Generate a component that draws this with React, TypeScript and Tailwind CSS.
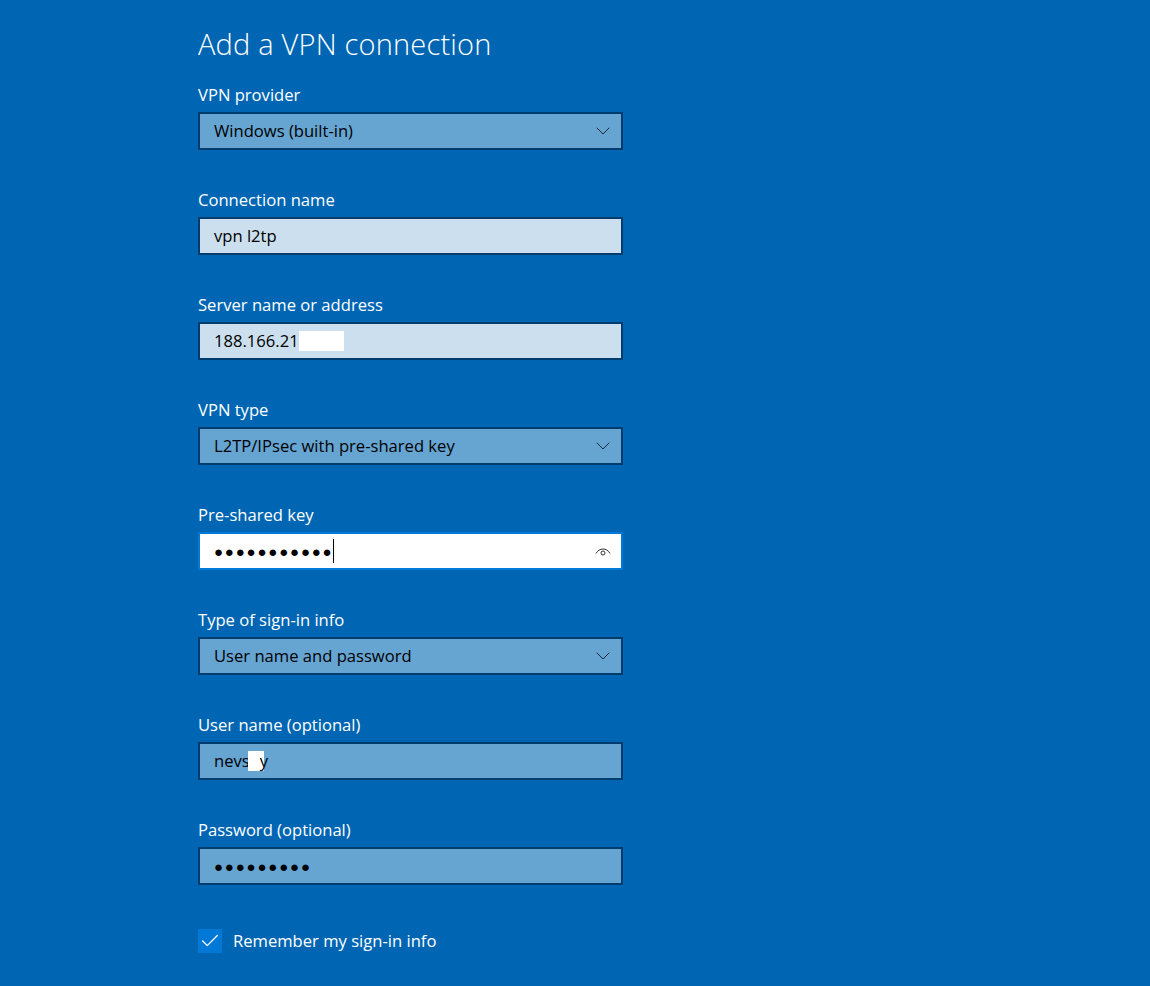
import { ChevronDown, Check } from "lucide-react";

type Field = {
  label: string;
  kind: "select" | "text" | "focus" | "plain";
  value: React.ReactNode;
};

const Dots = ({ n }: { n: number }) => (
  <span className="tracking-[1.8px] text-[15px]">{"●".repeat(n)}</span>
);

const EyeIcon = () => (
  <svg width="16" height="11" viewBox="0 0 16 11" fill="none" stroke="#333" strokeWidth="1" className="mr-[4px]">
    <path d="M1 7.5 C4 1.5 12 1.5 15 7.5" />
    <circle cx="8" cy="7" r="2" />
  </svg>
);

const FIELDS: Field[] = [
  { label: "VPN provider", kind: "select", value: "Windows (built-in)" },
  { label: "Connection name", kind: "text", value: "vpn l2tp" },
  {
    label: "Server name or address",
    kind: "text",
    value: (
      <span className="flex items-center">
        188.166.21
        <span className="inline-block w-[45px] h-[20px] bg-white" />
      </span>
    ),
  },
  { label: "VPN type", kind: "select", value: "L2TP/IPsec with pre-shared key" },
  {
    label: "Pre-shared key",
    kind: "focus",
    value: (
      <span className="flex items-center">
        <Dots n={11} />
        <span className="inline-block w-px h-[24px] bg-black" />
      </span>
    ),
  },
  { label: "Type of sign-in info", kind: "select", value: "User name and password" },
  {
    label: "User name (optional)",
    kind: "plain",
    value: (
      <span className="flex items-center">
        nevs
        <span className="inline-block w-[16px] h-[20px] bg-white -ml-[2px]" />
        <span className="-ml-[4px]">y</span>
      </span>
    ),
  },
  { label: "Password (optional)", kind: "plain", value: <Dots n={9} /> },
];

function Input({ f }: { f: Field }) {
  const base = "h-[38px] w-[425px] border-2 flex items-center pl-[14px] pr-[6px] text-[16.6px] text-black";
  const tone =
    f.kind === "focus"
      ? "bg-white border-[#0078d7]"
      : f.kind === "text"
      ? "bg-[#cbdfee] border-[#003d6e]"
      : "bg-[#66a5d2] border-[#003d6e]";
  return (
    <div className={`${base} ${tone}`}>
      <div className="flex-1">{f.value}</div>
      {f.kind === "select" && <ChevronDown size={24} strokeWidth={1} className="text-[#1a2a3a]" />}
      {f.kind === "focus" && <EyeIcon />}
    </div>
  );
}

export default function App() {
  return (
    <div
      className="min-h-[986px] w-full bg-[#0066b3] text-white"
      style={{ fontFamily: '"Open Sans", "Noto Sans", sans-serif' }}
    >
      <div className="pl-[198px] pt-[25px]">
        <h1 className="text-[29px] font-light leading-[38px] tracking-[0.2px]">Add a VPN connection</h1>
        <div className="mt-[21px] flex flex-col gap-[39px]">
          {FIELDS.map((f) => (
            <div key={f.label} className="flex flex-col">
              <label className="text-[16.6px] leading-[22px] mb-[6px]">{f.label}</label>
              <Input f={f} />
            </div>
          ))}
        </div>
        <div className="mt-[44px] flex items-center gap-[11px]">
          <div className="w-[24px] h-[24px] bg-[#0078d7] flex items-center justify-center">
            <Check size={22} strokeWidth={1.4} className="text-white" />
          </div>
          <span className="text-[16.6px]">Remember my sign-in info</span>
        </div>
      </div>
    </div>
  );
}
